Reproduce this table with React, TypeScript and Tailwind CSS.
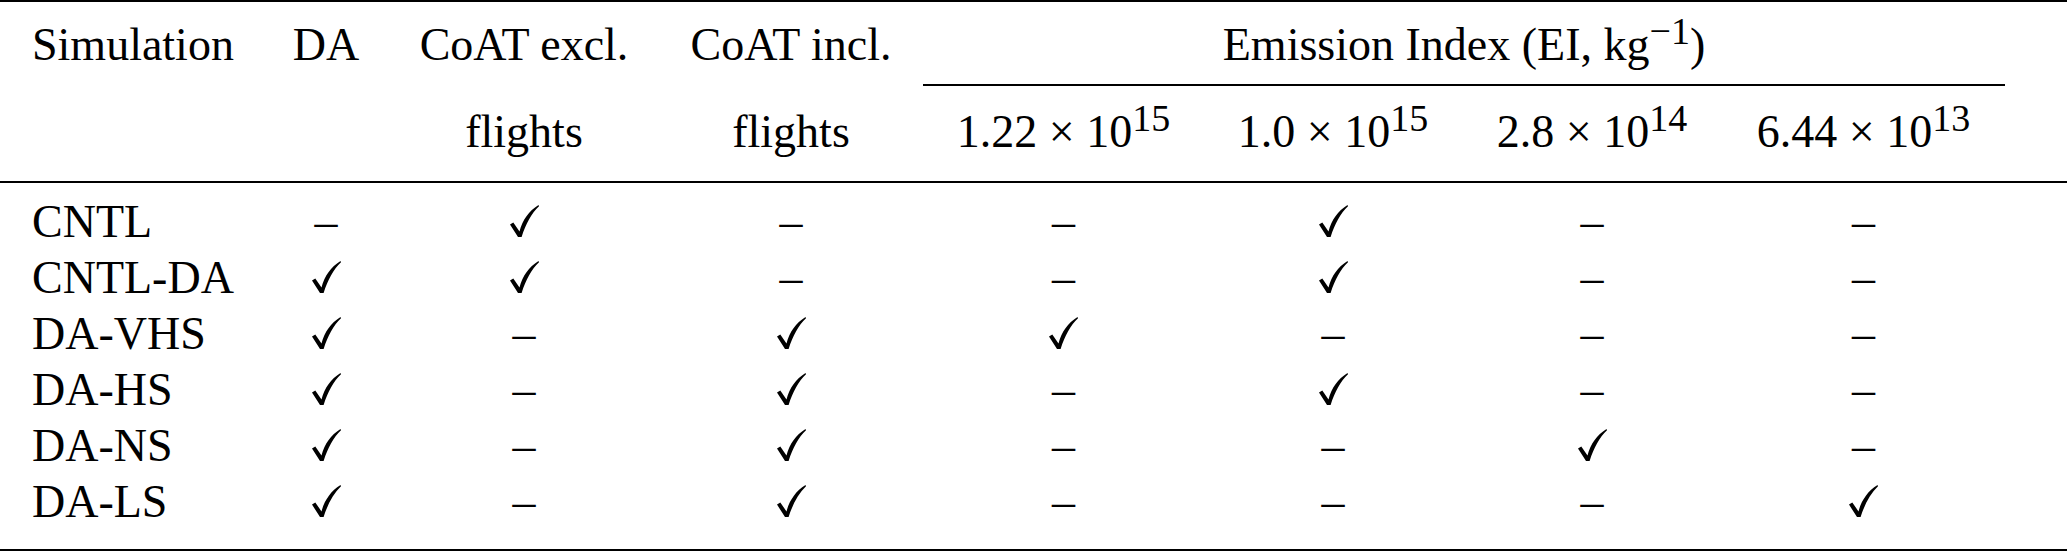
import React from 'react'

const cols = 'grid grid-cols-[263px_126px_270px_264px_281px_258px_260px_283px]'

const rows: [string, number[]][] = [
  ['CNTL', [0, 1, 0, 0, 1, 0, 0]],
  ['CNTL-DA', [1, 1, 0, 0, 1, 0, 0]],
  ['DA-VHS', [1, 0, 1, 1, 0, 0, 0]],
  ['DA-HS', [1, 0, 1, 0, 1, 0, 0]],
  ['DA-NS', [1, 0, 1, 0, 0, 1, 0]],
  ['DA-LS', [1, 0, 1, 0, 0, 0, 1]],
]

function Check() {
  return (
    <svg width="29" height="32" viewBox="0 0 29 32" className="inline-block align-baseline">
      <path
        d="M0 19.6 L3.3 17.5 L9.5 26.4 C12.6 15 18.8 6 28.5 0 L29 1.3 C21.6 8.3 15.9 18.6 11.6 32 L8 32 Z"
        fill="#000"
      />
    </svg>
  )
}

function Sup({ children }: { children: React.ReactNode }) {
  return <span className="relative -top-[16px] text-[38px] leading-none">{children}</span>
}

function Sci({ m, e }: { m: string; e: string }) {
  return (
    <span className="whitespace-nowrap">
      {m} × 10<Sup>{e}</Sup>
    </span>
  )
}

export default function App() {
  return (
    <div className="w-[2067px] h-[552px] bg-white text-black font-['Liberation_Serif','Times_New_Roman',serif] text-[46px] leading-[56px]">
      <div className="border-t-2 border-black pt-[15px] pb-[21px]">
        <div className={`${cols} grid-rows-[56px_31px_56px]`}>
          <div className="col-start-1 row-start-1 pl-[32px]">Simulation</div>
          <div className="col-start-2 row-start-1 text-center">DA</div>
          <div className="col-start-3 row-start-1 text-center">CoAT excl.</div>
          <div className="col-start-4 row-start-1 text-center">CoAT incl.</div>
          <div className="col-start-5 col-span-4 row-start-1 text-center">
            Emission Index (EI, kg<Sup>−1</Sup>)
          </div>
          <div className="col-start-5 col-span-4 row-start-2 pt-[11px]">
            <div className="h-[2px] bg-black" />
          </div>
          <div className="col-start-3 row-start-3 text-center">flights</div>
          <div className="col-start-4 row-start-3 text-center">flights</div>
          <div className="col-start-5 row-start-3 text-center">
            <Sci m="1.22" e="15" />
          </div>
          <div className="col-start-6 row-start-3 text-center">
            <Sci m="1.0" e="15" />
          </div>
          <div className="col-start-7 row-start-3 text-center">
            <Sci m="2.8" e="14" />
          </div>
          <div className="col-start-8 row-start-3 text-center">
            <Sci m="6.44" e="13" />
          </div>
        </div>
      </div>
      <div className="border-t-2 border-b-2 border-black pt-[11px] pb-[19px]">
        {rows.map(([name, marks]) => (
          <div key={name} className={cols}>
            <div className="pl-[32px]">{name}</div>
            {marks.map((m, i) => (
              <div key={i} className="text-center">
                {m ? <Check /> : '–'}
              </div>
            ))}
          </div>
        ))}
      </div>
    </div>
  )
}
